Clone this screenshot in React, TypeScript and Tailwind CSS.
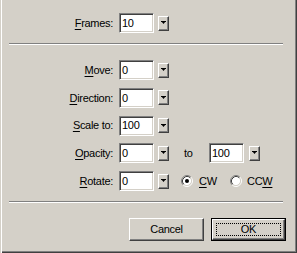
import React from 'react';

const sunken =
  'border border-t-[#808080] border-l-[#808080] border-b-white border-r-white shadow-[inset_1px_1px_#404040,inset_-1px_-1px_#d4d0c8]';
const raised =
  'border border-t-white border-l-white border-b-[#404040] border-r-[#404040] shadow-[inset_-1px_-1px_#808080]';

function Key({ u, rest }: { u: string; rest: string }) {
  return (
    <span>
      <span className="underline underline-offset-[2px]">{u}</span>
      {rest}
    </span>
  );
}

function Field({ value, className = '' }: { value: string; className?: string }) {
  return (
    <div className={`w-[35px] h-[20px] bg-white flex items-center pl-[2px] ${sunken} ${className}`}>
      {value}
    </div>
  );
}

function DropButton({ className = '' }: { className?: string }) {
  return (
    <div className={`w-[11px] h-[15px] bg-[#d4d0c8] flex items-center justify-center ${raised} ${className}`}>
      <svg width="5" height="4" viewBox="0 0 5 4">
        <polygon points="0,0 5,0 2.5,3" fill="#000" />
        <rect x="0" y="0" width="5" height="1" fill="#000" />
      </svg>
    </div>
  );
}

function Radio({ checked }: { checked?: boolean }) {
  return (
    <svg width="12" height="12" viewBox="0 0 12 12">
      <circle cx="6" cy="6" r="4.5" fill="#fff" />
      <path d="M2.11 9.89 A5.5 5.5 0 0 1 9.89 2.11" stroke="#808080" fill="none" />
      <path d="M9.89 2.11 A5.5 5.5 0 0 1 2.11 9.89" stroke="#fff" fill="none" />
      <path d="M2.82 9.18 A4.5 4.5 0 0 1 9.18 2.82" stroke="#404040" fill="none" />
      <path d="M9.18 2.82 A4.5 4.5 0 0 1 2.82 9.18" stroke="#d4d0c8" fill="none" />
      {checked && <circle cx="6" cy="6" r="2" fill="#000" />}
    </svg>
  );
}

function Row({ label, children }: { label: React.ReactNode; children: React.ReactNode }) {
  return (
    <div className="flex items-center h-[20px]">
      <div className="w-[113px] text-right">{label}</div>
      <div className="ml-[6px] flex items-center">{children}</div>
    </div>
  );
}

function Separator() {
  return <div className="mx-[9px] w-[274px] h-[2px] border-t border-t-[#808080] border-b border-b-white" />;
}

export default function App() {
  return (
    <div
      className="w-[297px] h-[253px] bg-[#d4d0c8] text-black text-[11px] tracking-[-0.3px] flex flex-col shadow-[inset_1px_0_#d4d0c8,inset_2px_0_#fff,inset_-1px_-1px_#404040,inset_-2px_-2px_#808080]"
      style={{ fontFamily: '"Liberation Sans", Arial, sans-serif' }}
    >
      <div className="pt-[13px]">
        <Row label={<Key u="F" rest="rames:" />}>
          <Field value="10" />
          <DropButton className="ml-[4px]" />
        </Row>
      </div>

      <div className="mt-[10px]">
        <Separator />
      </div>

      <div className="mt-[15px] flex flex-col gap-[7.75px]">
        <Row label={<Key u="M" rest="ove:" />}>
          <Field value="0" />
          <DropButton className="ml-[4px]" />
        </Row>
        <Row label={<Key u="D" rest="irection:" />}>
          <Field value="0" />
          <DropButton className="ml-[4px]" />
        </Row>
        <Row label={<Key u="S" rest="cale to:" />}>
          <Field value="100" />
          <DropButton className="ml-[4px]" />
        </Row>
        <Row label={<Key u="O" rest="pacity:" />}>
          <Field value="0" />
          <DropButton className="ml-[4px]" />
          <span className="ml-[15px] w-[25px]">to</span>
          <Field value="100" />
          <DropButton className="ml-[5px]" />
        </Row>
        <Row label={<Key u="R" rest="otate:" />}>
          <Field value="0" />
          <DropButton className="ml-[4px]" />
          <div className="ml-[12px] flex items-center">
            <Radio checked />
            <span className="ml-[6px] w-[31px]">
              <Key u="C" rest="W" />
            </span>
            <Radio />
            <span className="ml-[5px]">
              CC<span className="underline underline-offset-[2px]">W</span>
            </span>
          </div>
        </Row>
      </div>

      <div className="mt-[10px]">
        <Separator />
      </div>

      <div className="mt-[15px] flex justify-end gap-[7px] pr-[11px]">
        <button className={`w-[75px] h-[23px] bg-[#d4d0c8] flex items-center justify-center ${raised}`}>
          Cancel
        </button>
        <div className="w-[75px] h-[23px] border border-black">
          <button className={`relative w-full h-full bg-[#d4d0c8] flex items-center justify-center ${raised}`}>
            OK
            <span className="absolute inset-[3px] border border-dotted border-black" />
          </button>
        </div>
      </div>
    </div>
  );
}
